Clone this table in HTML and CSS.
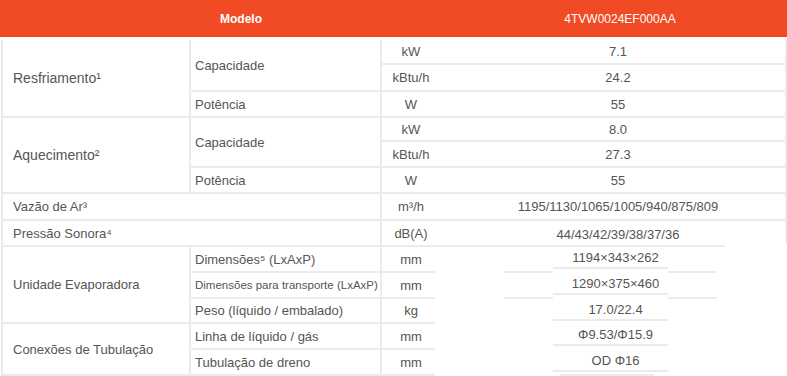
FILE: index.html
```html
<!DOCTYPE html>
<html lang="pt-BR">
<head>
<meta charset="utf-8">
<title>Especificações</title>
<link rel="stylesheet" href="styles.css">
</head>
<body>
<div class="head">
  <div class="h-model">Modelo</div>
  <div class="h-code">4TVW0024EF000AA</div>
</div>
<div class="spec">
  <div class="c c1 r3 big">Resfriamento¹</div>
  <div class="c c2 r2">Capacidade</div>
  <div class="c cu">kW</div>
  <div class="c cv">7.1</div>
  <div class="c cu">kBtu/h</div>
  <div class="c cv">24.2</div>
  <div class="c c2">Potência</div>
  <div class="c cu">W</div>
  <div class="c cv">55</div>

  <div class="c c1 r3 big">Aquecimento²</div>
  <div class="c c2 r2">Capacidade</div>
  <div class="c cu">kW</div>
  <div class="c cv">8.0</div>
  <div class="c cu">kBtu/h</div>
  <div class="c cv">27.3</div>
  <div class="c c2">Potência</div>
  <div class="c cu">W</div>
  <div class="c cv">55</div>

  <div class="c c1 w2">Vazão de Ar³</div>
  <div class="c cu">m³/h</div>
  <div class="c cv">1195/1130/1065/1005/940/875/809</div>

  <div class="c c1 w2">Pressão Sonora⁴</div>
  <div class="c cu">dB(A)</div>
  <div class="c cv open">44/43/42/39/38/37/36</div>

  <div class="c c1 r3">Unidade Evaporadora</div>
  <div class="c c2">Dimensões⁵ (LxAxP)</div>
  <div class="c cu">mm</div>
  <div class="vb seg"><div class="box">1194×343×262</div></div>
  <div class="c c2 small">Dimensões para transporte (LxAxP)</div>
  <div class="c cu">mm</div>
  <div class="vb seg"><div class="box">1290×375×460</div></div>
  <div class="c c2">Peso (líquido / embalado)</div>
  <div class="c cu">kg</div>
  <div class="vb"><div class="box">17.0/22.4</div></div>

  <div class="c c1 r2">Conexões de Tubulação</div>
  <div class="c c2">Linha de líquido / gás</div>
  <div class="c cu">mm</div>
  <div class="vb"><div class="box">Φ9.53/Φ15.9</div></div>
  <div class="c c2">Tubulação de dreno</div>
  <div class="c cu">mm</div>
  <div class="vb last"><div class="box">OD Φ16</div></div>
</div>
</body>
</html>
```

FILE: styles.css
```css
html, body {
  margin: 0;
  padding: 0;
  background: #ffffff;
}

body {
  width: 787px;
  height: 376px;
  overflow: hidden;
  font-family: "Liberation Sans", Arial, sans-serif;
}

.head {
  display: flex;
  height: 37px;
  background: #f04b25;
  color: #ffffff;
  font-size: 12px;
}

.h-model {
  width: 482px;
  display: flex;
  align-items: center;
  justify-content: center;
  font-weight: bold;
}

.h-code {
  flex: 1;
  display: flex;
  align-items: center;
  justify-content: center;
  padding-right: 29px;
}

.spec {
  display: grid;
  grid-template-columns: 190px 191px 53px 352px;
  grid-template-rows: 25px 27px 26px 24px 26px 26px 27px 26px 26px 26px 25px 26px 26px;
  margin: 3px 0 0 1px;
  font-size: 13px;
  color: #555555;
}

.c {
  box-sizing: border-box;
  display: flex;
  align-items: center;
  border-bottom: 2px solid #ebebeb;
  white-space: nowrap;
}

.c1 {
  border-left: 2px solid #ebebeb;
  border-right: 2px solid #ebebeb;
  padding-left: 10px;
}

.c2 {
  border-right: 2px solid #ebebeb;
  padding-left: 4px;
}

.cu {
  justify-content: center;
  padding-left: 5px;
}

.cv {
  justify-content: center;
  padding-left: 16px;
  border-right: 2px solid #ebebeb;
}

.cv.open {
  border-right: none;
  border-bottom: none;
  padding-right: 2px;
  background-image:
    linear-gradient(#ebebeb, #ebebeb),
    linear-gradient(#ebebeb, #ebebeb);
  background-repeat: no-repeat;
  background-position: right top, left bottom;
  background-size: 2px 22px, 290px 2px;
}

.r2 { grid-row: span 2; }
.r3 { grid-row: span 3; }
.w2 { grid-column: span 2; }

.big { font-size: 14px; }
.small { font-size: 11.5px; }

.vb {
  box-sizing: border-box;
  background-repeat: no-repeat;
}

.vb.seg {
  background-image:
    linear-gradient(#ebebeb, #ebebeb),
    linear-gradient(#ebebeb, #ebebeb);
  background-position: 69px bottom, 233px bottom;
  background-size: 49px 2px, 49px 2px;
}

.vb.last {
  background-image: linear-gradient(#ebebeb, #ebebeb);
  background-position: 125px bottom;
  background-size: 94px 2px;
}

.box {
  box-sizing: border-box;
  margin-left: 118px;
  width: 115px;
  height: 22px;
  padding-left: 10px;
  border-bottom: 2px solid #ebebeb;
  display: flex;
  align-items: center;
  justify-content: center;
  white-space: nowrap;
}
```
